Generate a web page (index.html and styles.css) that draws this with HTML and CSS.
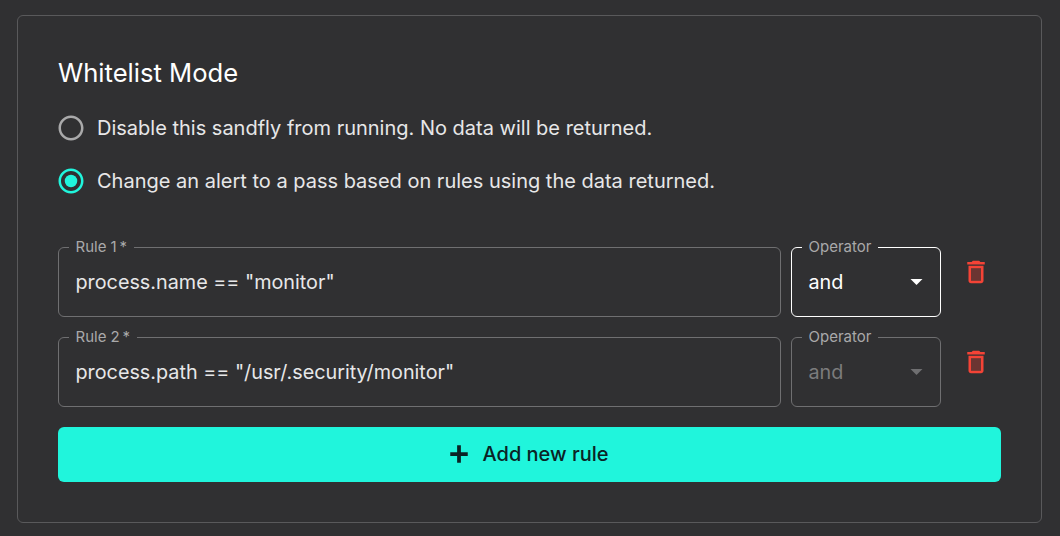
FILE: index.html
```html
<!DOCTYPE html>
<html lang="en">

<head>
    <meta charset="UTF-8">
    <title>Whitelist Mode</title>
    <link rel="stylesheet" href="styles.css">
</head>

<body>
    <div class="card">
        <h2>Whitelist Mode</h2>

        <div class="radio-group">
            <label class="radio-row">
                <svg class="radio-icon" viewBox="0 0 24 24">
                    <path d="M12 2C6.48 2 2 6.48 2 12s4.48 10 10 10 10-4.48 10-10S17.52 2 12 2zm0 18c-4.42 0-8-3.58-8-8s3.58-8 8-8 8 3.58 8 8-3.58 8-8 8z" />
                </svg>
                <span>Disable this sandfly from running. No data will be returned.</span>
            </label>
            <label class="radio-row checked">
                <svg class="radio-icon" viewBox="0 0 24 24">
                    <path d="M12 2C6.48 2 2 6.48 2 12s4.48 10 10 10 10-4.48 10-10S17.52 2 12 2zm0 18c-4.42 0-8-3.58-8-8s3.58-8 8-8 8 3.58 8 8-3.58 8-8 8z" />
                    <circle cx="12" cy="12" r="5" />
                </svg>
                <span>Change an alert to a pass based on rules using the data returned.</span>
            </label>
        </div>

        <div class="rule-row">
            <fieldset class="field rule-field">
                <legend>Rule 1&thinsp;*</legend>
                <div class="field-value">process.name == "monitor"</div>
            </fieldset>
            <fieldset class="field operator-field focused">
                <legend>Operator</legend>
                <div class="field-value">and</div>
                <svg class="caret" viewBox="0 0 12 6"><path d="M0 0h12L6 6z" /></svg>
            </fieldset>
            <button class="delete-btn" type="button" aria-label="Delete rule 1">
                <svg viewBox="0 0 24 24">
                    <path class="trash-fill" d="M8 9h8v10H8z" />
                    <path d="M15.5 4l-1-1h-5l-1 1H5v2h14V4zM6 19c0 1.1.9 2 2 2h8c1.1 0 2-.9 2-2V7H6v12zM8 9h8v10H8V9z" />
                </svg>
            </button>
        </div>

        <div class="rule-row">
            <fieldset class="field rule-field">
                <legend>Rule 2&thinsp;*</legend>
                <div class="field-value">process.path == "/usr/.security/monitor"</div>
            </fieldset>
            <fieldset class="field operator-field disabled">
                <legend>Operator</legend>
                <div class="field-value">and</div>
                <svg class="caret" viewBox="0 0 12 6"><path d="M0 0h12L6 6z" /></svg>
            </fieldset>
            <button class="delete-btn" type="button" aria-label="Delete rule 2">
                <svg viewBox="0 0 24 24">
                    <path class="trash-fill" d="M8 9h8v10H8z" />
                    <path d="M15.5 4l-1-1h-5l-1 1H5v2h14V4zM6 19c0 1.1.9 2 2 2h8c1.1 0 2-.9 2-2V7H6v12zM8 9h8v10H8V9z" />
                </svg>
            </button>
        </div>

        <button class="add-btn" type="button">
            <svg viewBox="0 0 24 24"><path d="M19 13.5h-5.5V19h-3v-5.5H5v-3h5.5V5h3v5.5H19z" /></svg>
            <span>Add new rule</span>
        </button>
    </div>
</body>

</html>
```

FILE: styles.css
```css
* {
    box-sizing: border-box;
}

body {
    font-family: Inter, "Liberation Sans", sans-serif;
    margin: 0;
    height: 536px;
    overflow: hidden;
    padding: 15px 18px 14px 17px;
    background-color: #303032;
    color: #e7e7e8;
}

.card {
    height: 508px;
    padding: 40px 40px 0 40px;
    border: 1px solid #59595b;
    border-radius: 6px;
}

.card h2 {
    margin: 0 0 23px 0;
    font-size: 25.6px;
    line-height: 34px;
    font-weight: 400;
    color: #fff;
}

.radio-group {
    display: flex;
    flex-direction: column;
    gap: 23px;
    margin-bottom: 43px;
}

.radio-row {
    display: flex;
    align-items: center;
    gap: 11px;
    height: 30px;
    margin-left: -2px;
    font-size: 20px;
}

.radio-icon {
    width: 30px;
    height: 30px;
    fill: #a9a9aa;
}

.radio-row.checked .radio-icon {
    fill: #20f5dc;
}

.rule-row {
    display: flex;
    align-items: flex-start;
    gap: 10px;
    margin-bottom: 12px;
}

.field {
    position: relative;
    height: 78px;
    margin: 0;
    padding: 0 16.5px;
    border: 1px solid #6f6f71;
    border-radius: 6px;
    min-width: 0;
}

.field legend {
    height: 16px;
    margin-left: -7px;
    padding: 0 7px;
    font-size: 15px;
    line-height: 16px;
    color: #a9a9aa;
}

.field-value {
    font-size: 19.8px;
    line-height: 24px;
    padding-top: 15px;
}

.rule-field {
    flex: 1;
}

.operator-field {
    width: 150px;
    flex-shrink: 0;
}

.operator-field.focused {
    border-color: #fff;
}

.operator-field.focused .field-value {
    color: #fff;
}

.operator-field.disabled .field-value {
    color: #7c7c7d;
}

.caret {
    position: absolute;
    right: 17px;
    top: 24px;
    width: 13px;
    height: 6px;
    fill: #fff;
}

.operator-field.disabled .caret {
    fill: #6f6f71;
}

.delete-btn {
    width: 50px;
    height: 66px;
    padding: 0;
    border: none;
    background: none;
    display: flex;
    align-items: center;
    justify-content: center;
    cursor: pointer;
}

.delete-btn svg {
    width: 30px;
    height: 30px;
    fill: #f44336;
}

.trash-fill {
    opacity: 0.3;
}

.add-btn {
    display: flex;
    align-items: center;
    justify-content: center;
    gap: 9px;
    width: 100%;
    height: 55px;
    margin-top: 20px;
    padding: 0 7px 2px 0;
    border: none;
    border-radius: 6px;
    background-color: #20f5dc;
    color: #0b2325;
    font-family: inherit;
    font-size: 20px;
    font-weight: 500;
    cursor: pointer;
}

.add-btn svg {
    width: 30px;
    height: 30px;
    fill: #0b2325;
}
```
